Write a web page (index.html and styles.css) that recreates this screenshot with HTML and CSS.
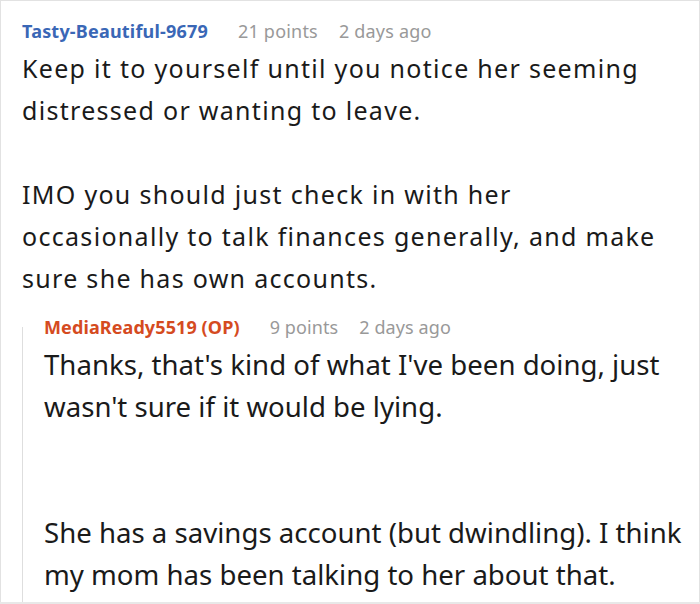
FILE: index.html
```html
<!DOCTYPE html>
<html lang="en">
<head>
<meta charset="utf-8">
<link rel="stylesheet" href="styles.css">
</head>
<body>
<div class="card">
  <div class="comment">
    <div class="meta">
      <span class="author">Tasty-Beautiful-9679</span>
      <span class="info">21 points</span>
      <span class="info">2 days ago</span>
    </div>
    <div class="body">
      <p>Keep it to yourself until you notice her seeming<br>distressed or wanting to leave.</p>
      <p>IMO you should just check in with her<br>occasionally to talk finances generally, and make<br>sure she has own accounts.</p>
    </div>
    <div class="reply">
      <div class="meta">
        <span class="author op">MediaReady5519 (OP)</span>
        <span class="info">9 points</span>
        <span class="info">2 days ago</span>
      </div>
      <div class="body cond">
        <p>Thanks, that's kind of what I've been doing, just<br>wasn't sure if it would be lying.</p>
        <p class="gap">She has a savings account (but dwindling). I think<br>my mom has been talking to her about that.</p>
      </div>
    </div>
  </div>
</div>
</body>
</html>
```
FILE: styles.css
```css
html, body {
  margin: 0;
  padding: 0;
}
body {
  background: #e8e8e8;
  width: 700px;
  height: 604px;
  overflow: hidden;
  font-family: "Noto Sans", "Open Sans", sans-serif;
}
.card {
  box-sizing: border-box;
  height: 602px;
  background: #fff;
  border: 1px solid #e2e2e2;
  border-bottom: none;
  overflow: hidden;
}
.comment {
  padding: 17px 0 0 21px;
}
.meta {
  display: flex;
  align-items: baseline;
  gap: 21px;
  font-size: 18px;
  line-height: 26px;
  letter-spacing: 0.2px;
  white-space: nowrap;
}
.author {
  font-weight: 700;
  color: #3a67b6;
  margin-right: 9px;
}
.author.op {
  color: #d54b1f;
}
.info {
  color: #999;
}
.body {
  font-size: 25px;
  letter-spacing: 1.3px;
  line-height: 42px;
  color: #1a1a1a;
  margin-top: 3px;
  white-space: nowrap;
}
.body p {
  margin: 0 0 42px;
}
.reply {
  display: flow-root;
  margin-top: -14px;
  border-left: 1px solid #dedede;
  padding: 0 0 0 21px;
  height: 400px;
}
.reply .meta {
  margin-top: -13px;
  letter-spacing: 0.1px;
}
.cond {
  font-size: 27.6px;
  letter-spacing: 0;
  margin-top: 3px;
}
.cond p.gap {
  margin-top: 84px;
}
```
